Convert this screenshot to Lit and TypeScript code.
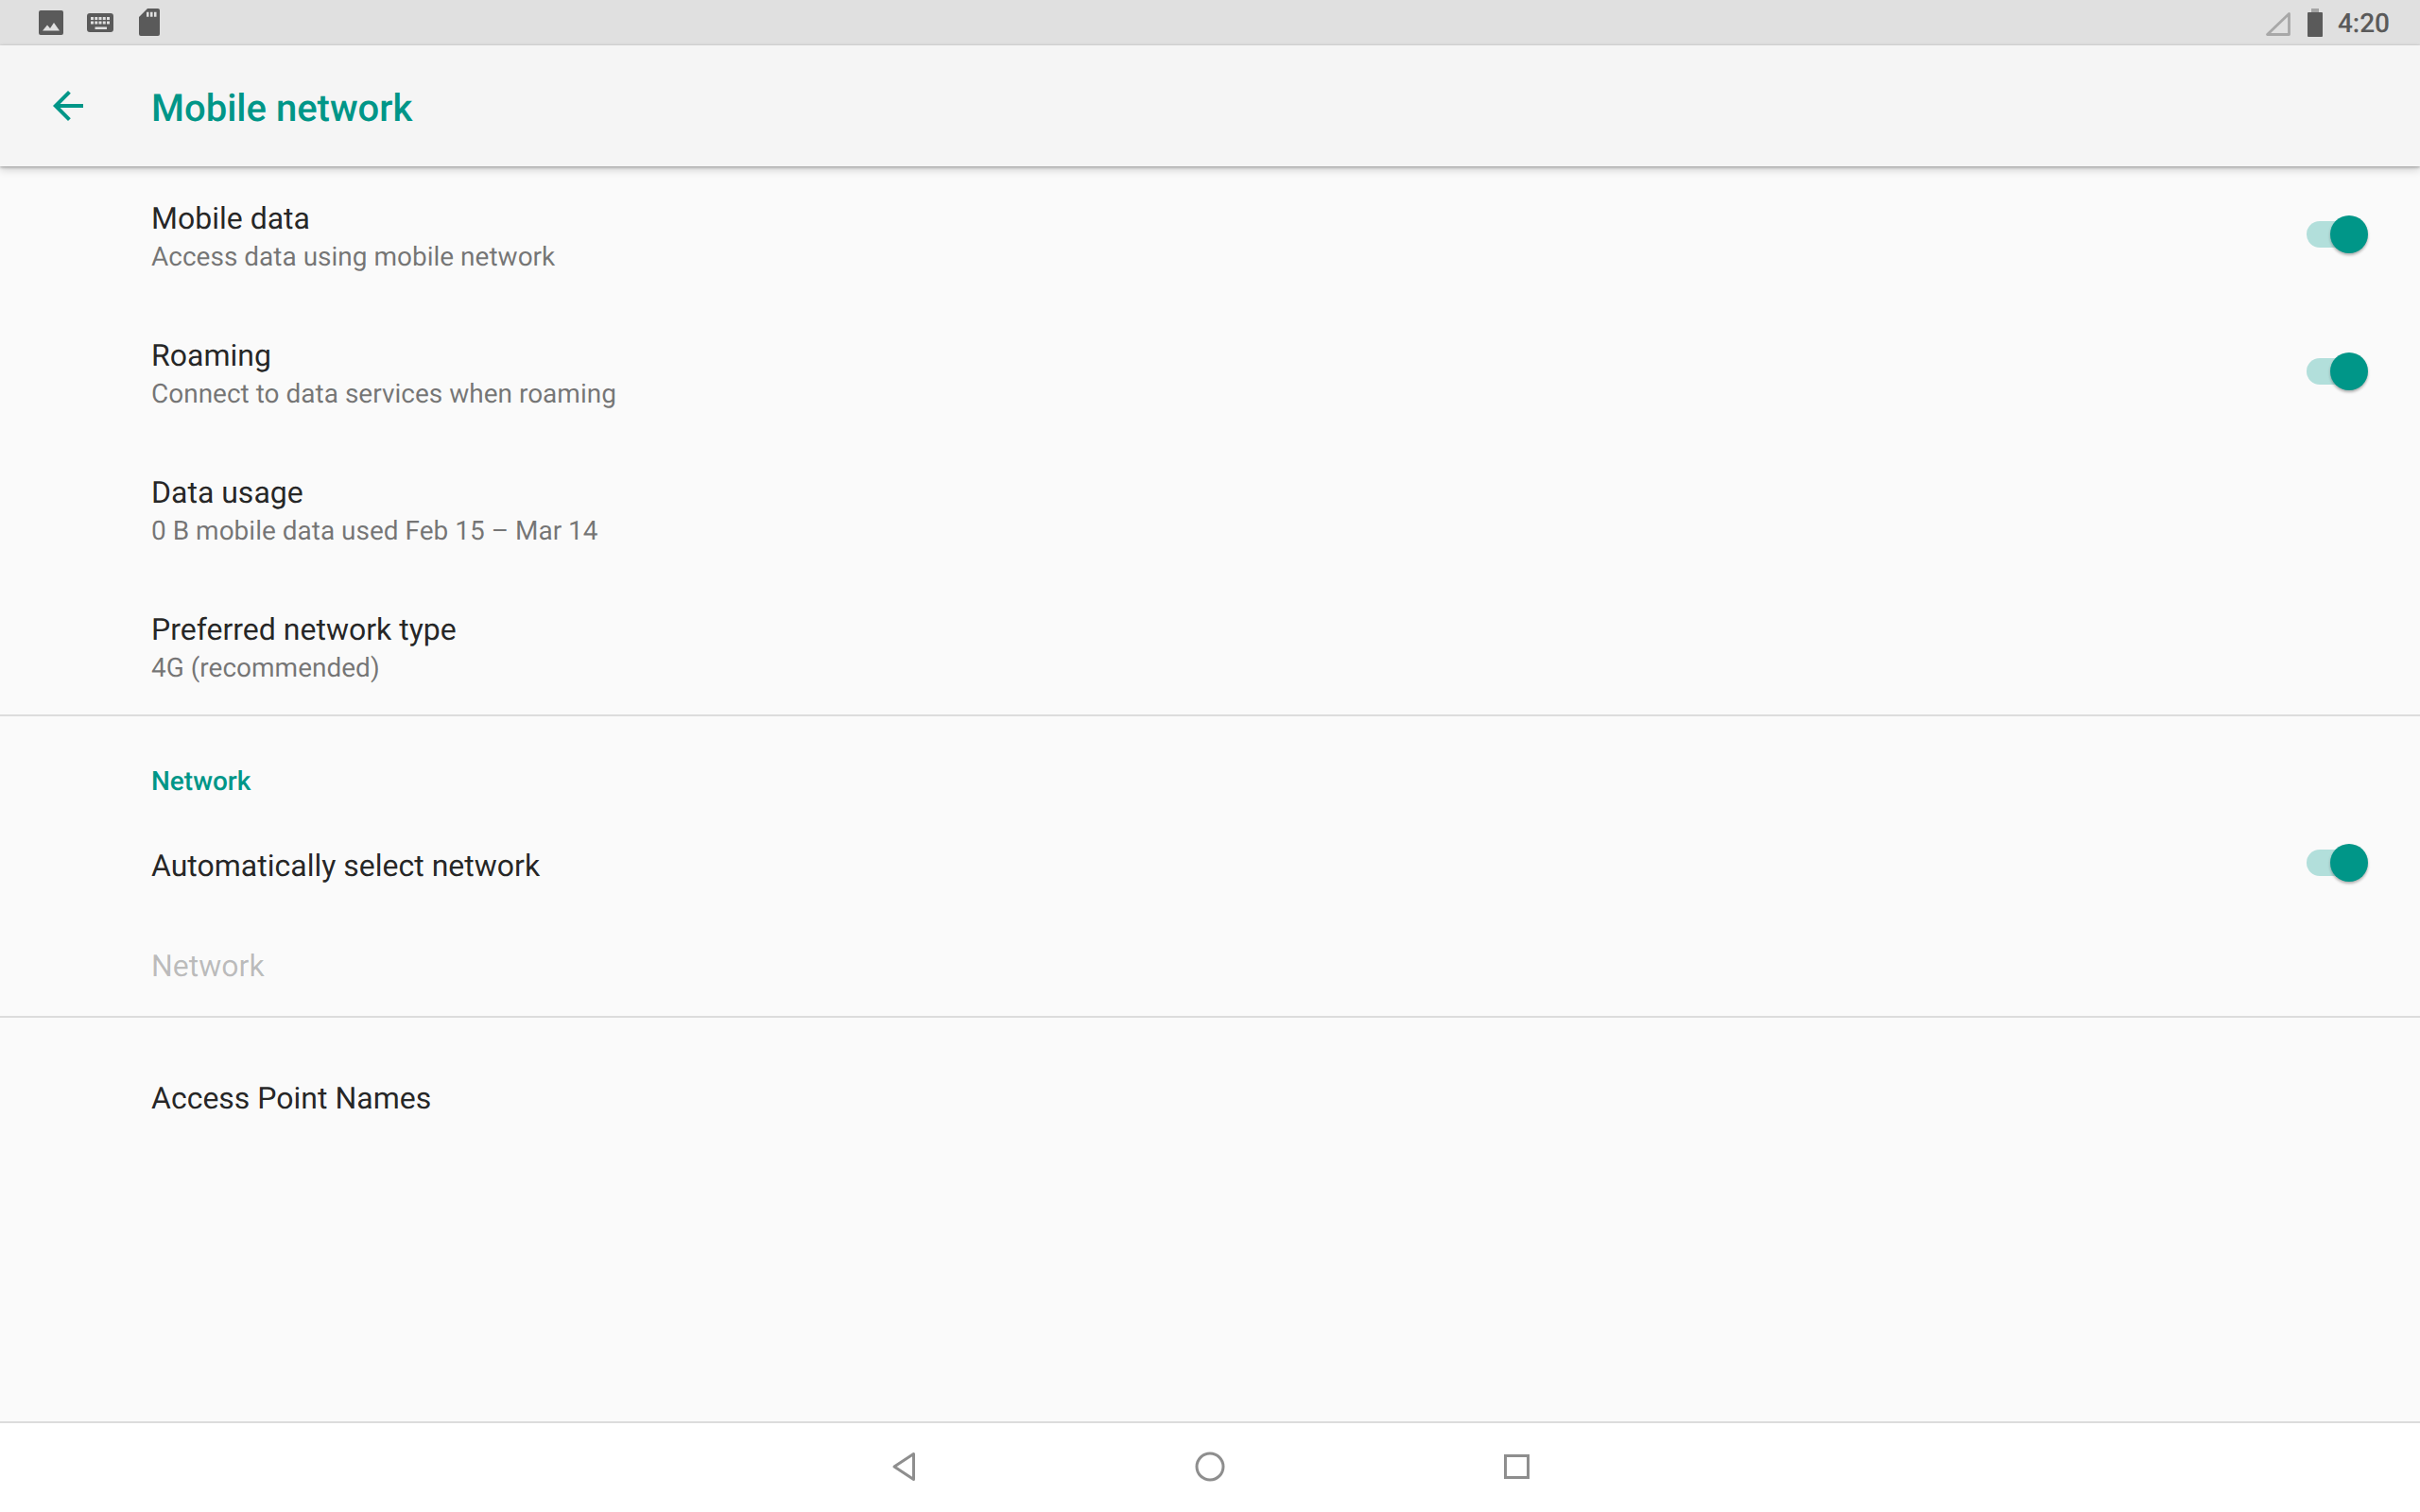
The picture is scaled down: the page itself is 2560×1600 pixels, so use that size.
import { LitElement, css, html, nothing } from 'lit'
import { customElement, property } from 'lit/decorators.js'

@customElement('pref-switch')
export class PrefSwitch extends LitElement {
  static styles = css`
    :host {
      display: block;
      position: relative;
      width: 68px;
      height: 40px;
      margin-bottom: 2px;
    }
    .track {
      position: absolute;
      left: 0;
      top: 6px;
      width: 56px;
      height: 28px;
      border-radius: 14px;
      background: #b2dfdb;
    }
    .thumb {
      position: absolute;
      left: 25px;
      top: 0;
      width: 40px;
      height: 40px;
      border-radius: 50%;
      background: #009688;
      box-shadow: 0 2px 3px rgba(0, 0, 0, 0.3);
    }
  `

  render() {
    return html`<div class="track"></div><div class="thumb"></div>`
  }
}

@customElement('pref-row')
export class PrefRow extends LitElement {
  static styles = css`
    :host {
      display: flex;
      align-items: center;
      justify-content: space-between;
      padding: 0 52px 0 160px;
      height: 145px;
    }
    :host([compact]) {
      height: 112px;
    }
    :host([disabled]) {
      height: 100px;
      padding-bottom: 5px;
    }
    :host([tall]) {
      height: 166px;
    }
    .text {
      padding-top: 4px;
    }
    .title {
      font-size: 32px;
      line-height: 42px;
      color: #000000de;
    }
    .summary {
      font-size: 28px;
      line-height: 40px;
      color: #0000008a;
    }
    :host([disabled]) .title {
      color: #00000042;
    }
  `

  @property() title = ''
  @property() summary = ''
  @property({ type: Boolean }) toggle = false

  render() {
    return html`
      <div class="text">
        <div class="title">${this.title}</div>
        ${this.summary ? html`<div class="summary">${this.summary}</div>` : nothing}
      </div>
      ${this.toggle ? html`<pref-switch></pref-switch>` : nothing}
    `
  }
}

@customElement('app-root')
export class AppRoot extends LitElement {
  static styles = css`
    :host {
      display: flex;
      flex-direction: column;
      width: 2560px;
      height: 1600px;
      overflow: hidden;
      background: #fafafa;
      font-family: Roboto, sans-serif;
      text-rendering: geometricPrecision;
    }
    .status {
      flex: none;
      height: 48px;
      background: #e0e0e0;
      display: flex;
      align-items: center;
      padding: 0 32px 0 38px;
      color: #5a5a5a;
    }
    .status svg {
      display: block;
    }
    .status-left {
      display: flex;
      gap: 20px;
      align-items: center;
    }
    .status-right {
      margin-left: auto;
      display: flex;
      align-items: center;
    }
    .signal {
      margin-right: 18px;
    }
    .battery {
      margin-right: 16px;
    }
    .time {
      margin-top: 1px;
      font-size: 28px;
      font-weight: 500;
    }
    .toolbar {
      flex: none;
      height: 128px;
      background: #f5f5f5;
      display: flex;
      align-items: center;
      padding-left: 48px;
      box-shadow: 0 4px 8px rgba(0, 0, 0, 0.16), 0 1px 3px rgba(0, 0, 0, 0.3);
      position: relative;
      color: #009688;
    }
    .toolbar svg {
      display: block;
      margin-right: 64px;
    }
    h1 {
      margin: 4px 0 0;
      font-size: 40px;
      font-weight: 500;
    }
    .content {
      flex: 1;
    }
    .divider {
      height: 2px;
      background: #dcdcdc;
    }
    .section {
      padding: 49px 0 11px 160px;
      font-size: 28px;
      line-height: 40px;
      font-weight: 500;
      color: #009688;
    }
    .nav {
      flex: none;
      height: 96px;
      background: #fff;
      border-top: 2px solid #dcdcdc;
      box-sizing: border-box;
      padding-bottom: 2px;
      display: flex;
      justify-content: center;
      align-items: center;
      gap: 292px;
      color: #8e8e8e;
    }
    .nav svg {
      display: block;
    }
  `

  render() {
    return html`
      <div class="status">
        <div class="status-left">
          <svg width="32" height="32" viewBox="0 0 32 32" fill="currentColor">
            <path fill-rule="evenodd" d="M5 3h22a2 2 0 0 1 2 2v22a2 2 0 0 1-2 2H5a2 2 0 0 1-2-2V5a2 2 0 0 1 2-2zM7 24.500h18L19 16l-4 6-3-3.500z" />
          </svg>
          <svg width="32" height="32" viewBox="0 0 32 32" fill="currentColor">
            <path fill-rule="evenodd" d="M5 6h22a3 3 0 0 1 3 3v14a3 3 0 0 1-3 3H5a3 3 0 0 1-3-3V9a3 3 0 0 1 3-3zM6 10v3h3v-3zm4.250 0v3h3v-3zm4.250 0v3h3v-3zm4.250 0v3h3v-3zM23 10v3h3v-3zM6 14.500v3h3v-3zm4.250 0v3h3v-3zm4.250 0v3h3v-3zm4.250 0v3h3v-3zm4.250 0v3h3v-3zM10.500 20.500V23H23v-2.500z" />
          </svg>
          <svg width="32" height="32" viewBox="0 0 32 32" fill="currentColor">
            <path fill-rule="evenodd" d="M14 1h11a2 2 0 0 1 2 2v25a2 2 0 0 1-2 2H7a2 2 0 0 1-2-2V10zM13 4.700v5h2.500v-5zm4 0v5h2.500v-5zm4 0v5h2.500v-5z" />
          </svg>
        </div>
        <div class="status-right">
          <svg class="signal" width="26" height="28" viewBox="0 0 26 28" fill="none" stroke="#a8a8a8" stroke-width="2.800" stroke-linejoin="round">
            <path d="M1.500 26.500 24.500 4.500v22z" />
          </svg>
          <svg class="battery" width="16" height="30" viewBox="0 0 16 30">
            <path fill="#a4a4a4" d="M4 0h8v4H4z" />
            <path fill="currentColor" d="M1 4h14a1 1 0 0 1 1 1v24a1 1 0 0 1-1 1H1a1 1 0 0 1-1-1V5a1 1 0 0 1 1-1z" />
          </svg>
          <span class="time">4:20</span>
        </div>
      </div>
      <div class="toolbar">
        <svg width="48" height="48" viewBox="0 0 24 24" fill="currentColor">
          <path d="M20 11H7.830l5.590-5.590L12 4l-8 8 8 8 1.410-1.410L7.830 13H20v-2z" />
        </svg>
        <h1>Mobile network</h1>
      </div>
      <div class="content">
        <pref-row title="Mobile data" summary="Access data using mobile network" toggle></pref-row>
        <pref-row title="Roaming" summary="Connect to data services when roaming" toggle></pref-row>
        <pref-row title="Data usage" summary="0 B mobile data used Feb 15 – Mar 14"></pref-row>
        <pref-row title="Preferred network type" summary="4G (recommended)"></pref-row>
        <div class="divider"></div>
        <div class="section">Network</div>
        <pref-row compact title="Automatically select network" toggle></pref-row>
        <pref-row disabled title="Network"></pref-row>
        <div class="divider"></div>
        <pref-row tall title="Access Point Names"></pref-row>
      </div>
      <div class="nav">
        <svg width="32" height="32" viewBox="0 0 32 32" fill="none" stroke="currentColor" stroke-width="3" stroke-linejoin="round">
          <path d="M26.500 2.500v27L6 16z" />
        </svg>
        <svg width="32" height="32" viewBox="0 0 32 32" fill="none" stroke="currentColor" stroke-width="3">
          <circle cx="16" cy="16" r="14" />
        </svg>
        <svg width="32" height="32" viewBox="0 0 32 32" fill="none" stroke="currentColor" stroke-width="3">
          <rect x="4.500" y="4.500" width="24" height="23" />
        </svg>
      </div>
    `
  }
}
